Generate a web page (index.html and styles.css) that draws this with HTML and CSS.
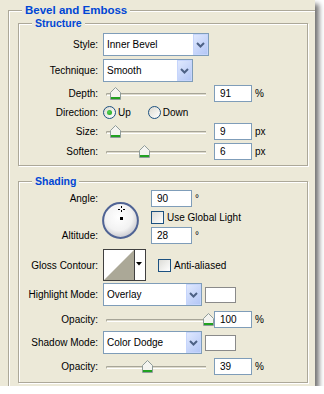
FILE: index.html
```html
<!DOCTYPE html>
<html lang="en">
<head>
  <meta charset="UTF-8">
  <title>Layer Style - Bevel and Emboss</title>
  <link rel="stylesheet" href="styles.css">
</head>
<body>
  <div class="window">
    <div class="group outer">
      <div class="legend legend-main">Bevel and Emboss</div>

      <!-- Structure -->
      <div class="group inner structure">
        <div class="legend">Structure</div>

        <div class="row row-select first">
          <span class="label">Style:</span>
          <div class="select w-style">
            <span class="select-text">Inner Bevel</span>
            <span class="select-btn"><svg width="9" height="6" viewBox="0 0 9 6"><path d="M1 1 L4.5 4.5 L8 1" fill="none" stroke="#4d6185" stroke-width="2"/></svg></span>
          </div>
        </div>

        <div class="row row-select">
          <span class="label">Technique:</span>
          <div class="select w-technique">
            <span class="select-text">Smooth</span>
            <span class="select-btn"><svg width="9" height="6" viewBox="0 0 9 6"><path d="M1 1 L4.5 4.5 L8 1" fill="none" stroke="#4d6185" stroke-width="2"/></svg></span>
          </div>
        </div>

        <div class="row row-field">
          <span class="label">Depth:</span>
          <div class="slider">
            <span class="track"></span>
            <span class="thumb" style="left: 7px"><svg width="11" height="13" viewBox="0 0 11 13"><path d="M0.5 12.5V5.5L5.5 0.5L10.5 5.5V12.5Z" fill="#f4f4f0" stroke="#8f9c9a"/><rect x="1" y="10" width="9" height="2" fill="#21a121"/></svg></span>
          </div>
          <span class="field">91</span>
          <span class="unit">%</span>
        </div>

        <div class="row row-radio">
          <span class="label">Direction:</span>
          <span class="radio checked"></span>
          <span class="radio-text">Up</span>
          <span class="radio second"></span>
          <span class="radio-text">Down</span>
        </div>

        <div class="row row-field tight">
          <span class="label">Size:</span>
          <div class="slider">
            <span class="track"></span>
            <span class="thumb" style="left: 7px"><svg width="11" height="13" viewBox="0 0 11 13"><path d="M0.5 12.5V5.5L5.5 0.5L10.5 5.5V12.5Z" fill="#f4f4f0" stroke="#8f9c9a"/><rect x="1" y="10" width="9" height="2" fill="#21a121"/></svg></span>
          </div>
          <span class="field">9</span>
          <span class="unit">px</span>
        </div>

        <div class="row row-field">
          <span class="label">Soften:</span>
          <div class="slider">
            <span class="track"></span>
            <span class="thumb" style="left: 36px"><svg width="11" height="13" viewBox="0 0 11 13"><path d="M0.5 12.5V5.5L5.5 0.5L10.5 5.5V12.5Z" fill="#f4f4f0" stroke="#8f9c9a"/><rect x="1" y="10" width="9" height="2" fill="#21a121"/></svg></span>
          </div>
          <span class="field">6</span>
          <span class="unit">px</span>
        </div>
      </div>

      <!-- Shading -->
      <div class="group inner shading">
        <div class="legend">Shading</div>

        <div class="angle-block">
          <span class="label angle-label">Angle:</span>
          <div class="dial">
            <svg width="37" height="37" viewBox="0 0 37 37">
              <defs>
                <radialGradient id="dialFill" cx="45%" cy="40%" r="60%">
                  <stop offset="0" stop-color="#ffffff"/>
                  <stop offset="0.65" stop-color="#f2f2f2"/>
                  <stop offset="1" stop-color="#c9c9cf"/>
                </radialGradient>
              </defs>
              <circle cx="18.5" cy="18.5" r="17.4" fill="url(#dialFill)" stroke="#4f6394" stroke-width="2"/>
              <path d="M19.5 4v2M19.5 8v2M16 7.5h2M21 7.5h2" stroke="#000" stroke-width="1"/>
              <rect x="18" y="15" width="3" height="3" fill="#000"/>
            </svg>
          </div>
          <div class="angle-value">
            <span class="field small">90</span>
            <span class="unit">°</span>
          </div>
          <div class="global-light">
            <span class="checkbox"></span>
            <span class="check-text">Use Global Light</span>
          </div>
          <span class="label altitude-label">Altitude:</span>
          <div class="altitude-value">
            <span class="field small">28</span>
            <span class="unit">°</span>
          </div>
        </div>

        <div class="row row-contour">
          <span class="label">Gloss Contour:</span>
          <svg class="contour" width="43" height="32" viewBox="0 0 43 32">
            <rect x="0.5" y="0.5" width="42" height="31" fill="#fff" stroke="#404040"/>
            <path d="M1 31 L31 1 V31 Z" fill="#aba897"/>
            <line x1="31.5" y1="1" x2="31.5" y2="31" stroke="#404040"/>
            <path d="M33 13h6l-3 3.5z" fill="#000"/>
          </svg>
          <span class="checkbox anti"></span>
          <span class="check-text">Anti-aliased</span>
        </div>

        <div class="row row-select mode">
          <span class="label">Highlight Mode:</span>
          <div class="select w-mode">
            <span class="select-text">Overlay</span>
            <span class="select-btn"><svg width="9" height="6" viewBox="0 0 9 6"><path d="M1 1 L4.5 4.5 L8 1" fill="none" stroke="#4d6185" stroke-width="2"/></svg></span>
          </div>
          <span class="swatch"></span>
        </div>

        <div class="row row-field opacity-1">
          <span class="label">Opacity:</span>
          <div class="slider">
            <span class="track"></span>
            <span class="thumb" style="left: 100px"><svg width="11" height="13" viewBox="0 0 11 13"><path d="M0.5 12.5V5.5L5.5 0.5L10.5 5.5V12.5Z" fill="#f4f4f0" stroke="#8f9c9a"/><rect x="1" y="10" width="9" height="2" fill="#21a121"/></svg></span>
          </div>
          <span class="field">100</span>
          <span class="unit">%</span>
        </div>

        <div class="row row-select">
          <span class="label">Shadow Mode:</span>
          <div class="select w-mode">
            <span class="select-text">Color Dodge</span>
            <span class="select-btn"><svg width="9" height="6" viewBox="0 0 9 6"><path d="M1 1 L4.5 4.5 L8 1" fill="none" stroke="#4d6185" stroke-width="2"/></svg></span>
          </div>
          <span class="swatch"></span>
        </div>

        <div class="row row-field opacity-2">
          <span class="label">Opacity:</span>
          <div class="slider">
            <span class="track"></span>
            <span class="thumb" style="left: 39px"><svg width="11" height="13" viewBox="0 0 11 13"><path d="M0.5 12.5V5.5L5.5 0.5L10.5 5.5V12.5Z" fill="#f4f4f0" stroke="#8f9c9a"/><rect x="1" y="10" width="9" height="2" fill="#21a121"/></svg></span>
          </div>
          <span class="field">39</span>
          <span class="unit">%</span>
        </div>
      </div>
    </div>
  </div>
</body>
</html>
```

FILE: styles.css
```css
body {
  margin: 0;
  background-color: #fff;
  font-family: "Liberation Sans", Arial, sans-serif;
  font-size: 10px;
  color: #000;
}

.window {
  width: 315px;
  height: 386px;
  box-sizing: border-box;
  padding: 10px 0 0 8px;
  background-color: #ece9d8;
  box-shadow: 4px 4px 5px rgba(0, 0, 0, 0.55);
  overflow: hidden;
}

/* etched group boxes */
.group {
  border: 1px solid #aca899;
  box-shadow: inset 1px 1px 0 #fff, 1px 1px 0 #fff;
  box-sizing: border-box;
}

.outer {
  width: 330px;
  height: 400px;
  border-right: none;
  border-bottom: none;
}

.inner {
  width: 290px;
  margin-left: 9px;
}

.structure {
  margin-top: 7px;
  padding-bottom: 5px;
}

.shading {
  margin-top: 15px;
  padding-bottom: 7px;
}

.legend {
  width: max-content;
  margin: -7px 0 0 13px;
  padding: 0 3px;
  background-color: #ece9d8;
  color: #0046d5;
  font-weight: bold;
  font-size: 10.5px;
  line-height: 12px;
}

.legend-main {
  font-size: 11.5px;
}

/* rows */
.row {
  display: flex;
  align-items: center;
  margin-top: 3px;
}

.row.first {
  margin-top: 4px;
}

.row-select {
  height: 23px;
}

.row-field {
  height: 17px;
}

.row-radio {
  height: 17px;
  margin-top: 2px;
}

.row.tight {
  margin-top: 2px;
}

.label {
  flex: none;
  width: 79px;
  margin-right: 5px;
  text-align: right;
}

/* combo boxes */
.select {
  display: flex;
  height: 23px;
  box-sizing: border-box;
  border: 1px solid #7f9db9;
  background-color: #fff;
}

.w-style { width: 106px; }
.w-technique { width: 90px; }
.w-mode { width: 99px; }

.select-text {
  flex: 1;
  padding-left: 3px;
  line-height: 21px;
}

.select-btn {
  width: 15px;
  display: flex;
  align-items: center;
  justify-content: center;
  box-sizing: border-box;
  border: 1px solid #c6d5fc;
  background: linear-gradient(135deg, #dfe8fe, #b4c7f6);
}

.swatch {
  width: 31px;
  height: 16px;
  box-sizing: border-box;
  margin-left: 3px;
  border: 1px solid #8a8a8a;
  background-color: #fff;
}

/* sliders */
.slider {
  position: relative;
  width: 106px;
  height: 17px;
  flex: none;
}

.track {
  display: block;
  margin: 8px 0 0 3px;
  width: 100px;
  height: 3px;
  box-sizing: border-box;
  border-top: 1px solid #a7a598;
  border-bottom: 1px solid #fff;
  border-left: 1px solid #a7a598;
  border-radius: 2px 0 0 2px;
  background-color: #dedbcd;
}

.thumb {
  position: absolute;
  top: 2px;
  line-height: 0;
}

.field {
  width: 38px;
  height: 17px;
  box-sizing: border-box;
  margin-left: 5px;
  padding-left: 5px;
  border: 1px solid #7f9db9;
  background-color: #fff;
  line-height: 15px;
}

.unit {
  margin-left: 3px;
}

/* radios and checkboxes */
.radio {
  width: 13px;
  height: 13px;
  box-sizing: border-box;
  border: 1px solid #1c5180;
  border-radius: 50%;
  background: linear-gradient(135deg, #dcdad0, #fff);
  display: flex;
  align-items: center;
  justify-content: center;
}

.radio.checked::after {
  content: "";
  width: 5px;
  height: 5px;
  border-radius: 50%;
  background: radial-gradient(circle at 40% 40%, #55d555, #1a9b1a);
}

.radio.second {
  margin-left: 17px;
}

.radio-text {
  margin-left: 2px;
}

.checkbox {
  flex: none;
  width: 13px;
  height: 13px;
  box-sizing: border-box;
  border: 1px solid #1c5180;
  background: linear-gradient(135deg, #dcdcd7, #fff);
}

.check-text {
  margin-left: 3px;
}

/* angle / altitude */
.angle-block {
  display: grid;
  grid-template-columns: 79px 43px auto;
  grid-template-rows: 17px 16px 17px;
  column-gap: 5px;
  row-gap: 2px;
  margin-top: 3px;
  align-items: center;
}

.angle-label {
  grid-column: 1;
  grid-row: 1;
  margin-right: 0;
}

.altitude-label {
  grid-column: 1;
  grid-row: 3;
  margin-right: 0;
}

.dial {
  grid-column: 2;
  grid-row: 1 / 4;
  align-self: start;
  margin: 12px 0 0 -1px;
  line-height: 0;
}

.angle-value,
.altitude-value,
.global-light {
  grid-column: 3;
  display: flex;
  align-items: center;
}

.angle-value { grid-row: 1; }
.global-light { grid-row: 2; }
.altitude-value { grid-row: 3; }

.field.small {
  width: 41px;
  margin-left: 0;
}

.row-contour {
  height: 32px;
  margin-top: 5px;
}

.contour {
  flex: none;
}

.checkbox.anti {
  margin-left: 12px;
}

.row.mode {
  margin-top: 2px;
}

.row.opacity-1 {
  margin-top: 5px;
}

.row.opacity-2 {
  margin-top: 4px;
}
```
